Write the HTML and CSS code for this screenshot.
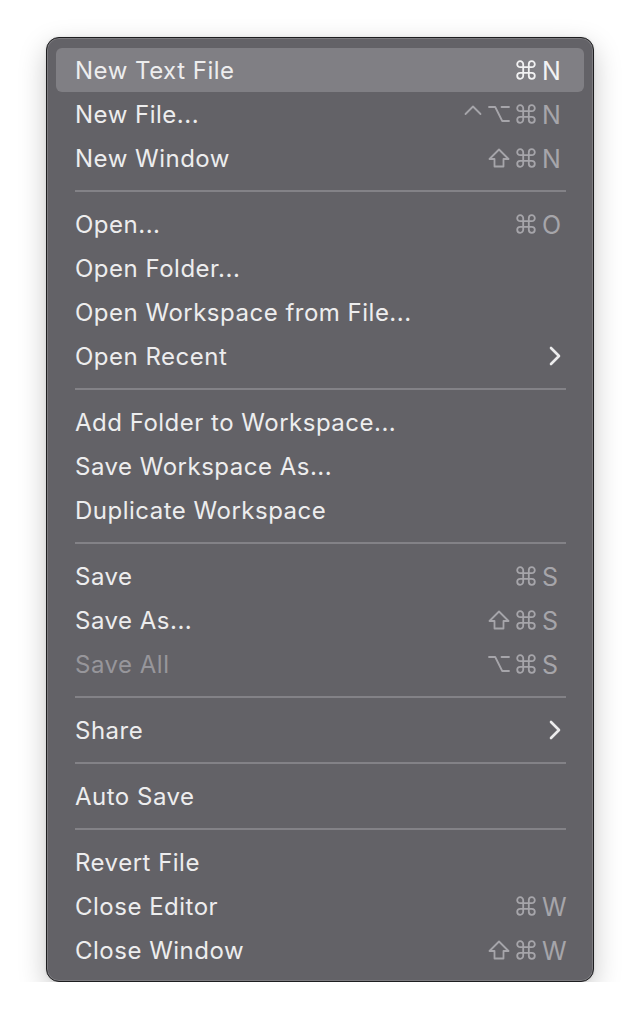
FILE: index.html
```html
<!DOCTYPE html>
<html lang="en">
<head>
<meta charset="utf-8">
<title>File menu</title>
<link rel="stylesheet" href="styles.css">
</head>
<body>
<svg width="0" height="0" class="defs">
  <defs>
    <symbol id="cmd" viewBox="0 0 20 20"><path d="M7.2 7.2V4.2A3 3 0 1 0 4.2 7.2H15.8A3 3 0 1 0 12.8 4.2V15.8A3 3 0 1 0 15.8 12.8H4.2A3 3 0 1 0 7.2 15.8Z"/></symbol>
    <symbol id="shift" viewBox="0 0 22 20"><path d="M11 1.5L20.5 11H15.5V18.5H6.5V11H1.5Z"/></symbol>
    <symbol id="opt" viewBox="0 0 22 20"><path d="M1 3H7.2L14.2 17H21M13.5 3H21"/></symbol>
    <symbol id="ctrl" viewBox="0 0 18 20"><path d="M1.5 10L9 2.5L16.5 10"/></symbol>
    <symbol id="chev" viewBox="0 0 12 20"><path d="M2 2L10 10L2 18"/></symbol>
  </defs>
</svg>
<div class="menu">
  <div class="item active"><span class="label">New Text File</span><span class="sc"><span class="mods"><svg class="m w20"><use href="#cmd"/></svg></span><span class="key">N</span></span></div>
  <div class="item"><span class="label">New File...</span><span class="sc"><span class="mods"><svg class="m w18"><use href="#ctrl"/></svg><svg class="m w22"><use href="#opt"/></svg><svg class="m w20"><use href="#cmd"/></svg></span><span class="key">N</span></span></div>
  <div class="item"><span class="label">New Window</span><span class="sc"><span class="mods"><svg class="m w22"><use href="#shift"/></svg><svg class="m w20"><use href="#cmd"/></svg></span><span class="key">N</span></span></div>
  <div class="sep"></div>
  <div class="item"><span class="label">Open...</span><span class="sc"><span class="mods"><svg class="m w20"><use href="#cmd"/></svg></span><span class="key">O</span></span></div>
  <div class="item"><span class="label">Open Folder...</span></div>
  <div class="item"><span class="label">Open Workspace from File...</span></div>
  <div class="item"><span class="label">Open Recent</span><svg class="chev"><use href="#chev"/></svg></div>
  <div class="sep"></div>
  <div class="item"><span class="label">Add Folder to Workspace...</span></div>
  <div class="item"><span class="label">Save Workspace As...</span></div>
  <div class="item"><span class="label">Duplicate Workspace</span></div>
  <div class="sep"></div>
  <div class="item"><span class="label">Save</span><span class="sc"><span class="mods"><svg class="m w20"><use href="#cmd"/></svg></span><span class="key">S</span></span></div>
  <div class="item"><span class="label">Save As...</span><span class="sc"><span class="mods"><svg class="m w22"><use href="#shift"/></svg><svg class="m w20"><use href="#cmd"/></svg></span><span class="key">S</span></span></div>
  <div class="item disabled"><span class="label">Save All</span><span class="sc"><span class="mods"><svg class="m w22"><use href="#opt"/></svg><svg class="m w20"><use href="#cmd"/></svg></span><span class="key">S</span></span></div>
  <div class="sep"></div>
  <div class="item"><span class="label">Share</span><svg class="chev"><use href="#chev"/></svg></div>
  <div class="sep"></div>
  <div class="item"><span class="label">Auto Save</span></div>
  <div class="sep"></div>
  <div class="item"><span class="label">Revert File</span></div>
  <div class="item"><span class="label">Close Editor</span><span class="sc"><span class="mods"><svg class="m w20"><use href="#cmd"/></svg></span><span class="key">W</span></span></div>
  <div class="item"><span class="label">Close Window</span><span class="sc"><span class="mods"><svg class="m w22"><use href="#shift"/></svg><svg class="m w20"><use href="#cmd"/></svg></span><span class="key">W</span></span></div>
</div>
</body>
</html>
```
FILE: styles.css
```css
html, body {
  margin: 0;
  padding: 0;
  background: #ffffff;
}
body {
  padding: 37px 0 0 46px;
  font-family: Inter, "Noto Sans", "Liberation Sans", sans-serif;
}
.defs {
  position: absolute;
  width: 0;
  height: 0;
  overflow: hidden;
}
.menu {
  box-sizing: border-box;
  width: 548px;
  height: 945px;
  padding: 10px 9px 8px 9px;
  background: #636267;
  border: 1px solid #1e1e20;
  border-radius: 13px;
  box-shadow: inset 0 0 0 1px rgba(255, 255, 255, 0.16), 0 10px 28px rgba(0, 0, 0, 0.22), 0 0 3px rgba(0, 0, 0, 0.1);
  display: flex;
  flex-direction: column;
}
.item {
  height: 44px;
  flex: none;
  display: flex;
  align-items: center;
  padding: 0 21px 0 19px;
  border-radius: 6px;
  color: #ededee;
  font-size: 24px;
  letter-spacing: 0.5px;
}
.item.active {
  background: #807f84;
}
.label {
  flex: 1;
  white-space: nowrap;
  padding-top: 1px;
}
.item.disabled .label {
  color: #97969b;
}
.sc {
  display: flex;
  align-items: center;
  color: #a6a5aa;
}
.item.active .sc {
  color: #f2f2f3;
}
.mods {
  display: flex;
  align-items: center;
  gap: 6px;
}
.m {
  height: 20px;
  fill: none;
  stroke: currentColor;
  stroke-width: 1.8;
  stroke-linejoin: round;
  stroke-linecap: round;
}
.w18 { width: 18px; }
.w20 { width: 20px; }
.w22 { width: 22px; }
.key {
  width: 21px;
  margin-left: 6px;
  padding-top: 1px;
  font-size: 25px;
  letter-spacing: 0;
}
.chev {
  width: 12px;
  height: 20px;
  margin-right: 2px;
  fill: none;
  stroke: #ececed;
  stroke-width: 2.6;
  stroke-linecap: round;
  stroke-linejoin: round;
}
.sep {
  height: 22px;
  flex: none;
  display: flex;
  align-items: center;
  padding: 0 18px 0 19px;
}
.sep::before {
  content: "";
  display: block;
  flex: 1;
  height: 2px;
  background: #838287;
}
```
